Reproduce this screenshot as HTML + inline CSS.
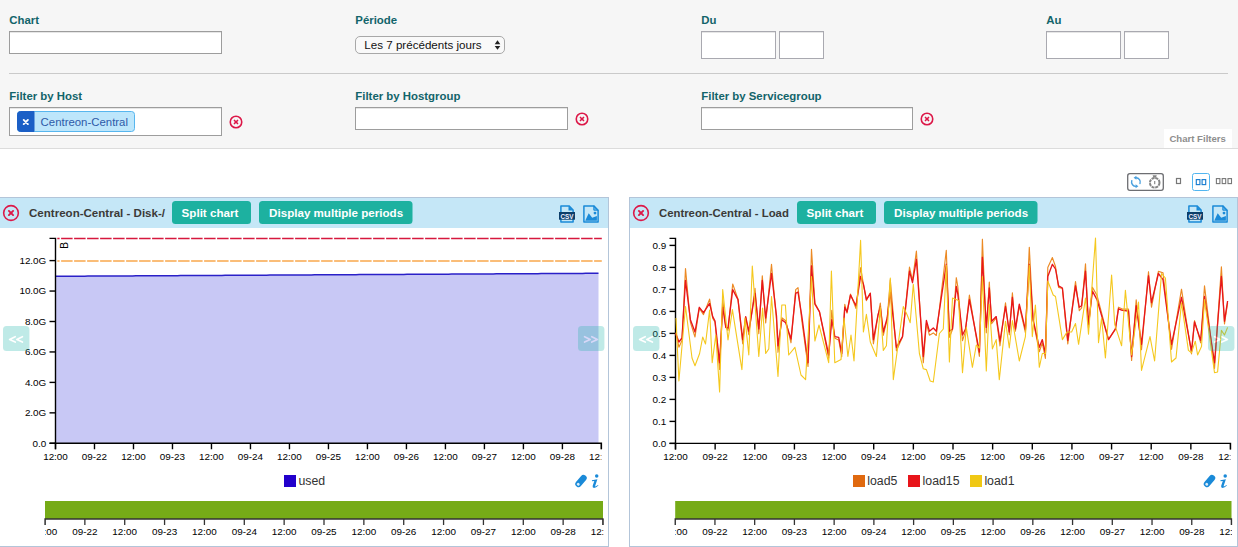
<!DOCTYPE html>
<html><head><meta charset="utf-8"><style>
html,body{margin:0;padding:0;background:#fff;overflow:hidden}
svg{display:block}
text{font-family:"Liberation Sans", sans-serif}
</style></head><body>
<svg width="1238" height="547" viewBox="0 0 1238 547">

<rect x="0" y="0" width="1238" height="148" fill="#f6f6f6"/>
<rect x="0" y="148" width="1238" height="1" fill="#dcdcdc"/>
<rect x="9" y="73" width="1219" height="1" fill="#cacaca"/>
<text x="9.3" y="24" font-size="11.4" font-weight="bold" fill="#12646a">Chart</text>
<text x="355.3" y="24" font-size="11.4" font-weight="bold" fill="#12646a">Période</text>
<text x="701.3" y="24" font-size="11.4" font-weight="bold" fill="#12646a">Du</text>
<text x="1046.3" y="24" font-size="11.4" font-weight="bold" fill="#12646a">Au</text>
<text x="9.3" y="100" font-size="11.4" font-weight="bold" fill="#12646a">Filter by Host</text>
<text x="355.3" y="100" font-size="11.4" font-weight="bold" fill="#12646a">Filter by Hostgroup</text>
<text x="701.3" y="100" font-size="11.4" font-weight="bold" fill="#12646a">Filter by Servicegroup</text>
<rect x="9.5" y="31.5" width="212" height="22" fill="#fff" stroke="#9d9d9d" stroke-width="1"/>
<rect x="10" y="32" width="211" height="1" fill="#e6e6e6"/>
<rect x="355.5" y="36.5" width="149" height="17" rx="4.5" fill="#f9f9f9" stroke="#a8a8a8"/>
<text x="364.3" y="48.7" font-size="11.6" fill="#111">Les 7 précédents jours</text>
<path d="M497.5 40.3 L500.3 44.2 L494.7 44.2 Z M497.5 49.8 L500.3 45.9 L494.7 45.9 Z" fill="#222"/>
<rect x="701.5" y="31.5" width="74" height="27" fill="#fff" stroke="#a9a9b0" stroke-width="1"/>
<rect x="702" y="32" width="73" height="1" fill="#e6e6e6"/>
<rect x="779.5" y="31.5" width="44" height="27" fill="#fff" stroke="#a9a9b0" stroke-width="1"/>
<rect x="780" y="32" width="43" height="1" fill="#e6e6e6"/>
<rect x="1046.5" y="31.5" width="74" height="27" fill="#fff" stroke="#a9a9b0" stroke-width="1"/>
<rect x="1047" y="32" width="73" height="1" fill="#e6e6e6"/>
<rect x="1124.5" y="31.5" width="44" height="27" fill="#fff" stroke="#a9a9b0" stroke-width="1"/>
<rect x="1125" y="32" width="43" height="1" fill="#e6e6e6"/>
<rect x="9.5" y="107.5" width="212" height="28" fill="#fff" stroke="#9d9d9d" stroke-width="1"/>
<rect x="10" y="108" width="211" height="1" fill="#e6e6e6"/>
<rect x="355.5" y="107.5" width="212" height="22" fill="#fff" stroke="#9d9d9d" stroke-width="1"/>
<rect x="356" y="108" width="211" height="1" fill="#e6e6e6"/>
<rect x="701.5" y="107.5" width="211" height="22" fill="#fff" stroke="#9d9d9d" stroke-width="1"/>
<rect x="702" y="108" width="210" height="1" fill="#e6e6e6"/>
<rect x="17.5" y="111.5" width="117" height="20" rx="3" fill="#bde6fb" stroke="#57b6ee"/>
<path d="M20.5 111.5 H34 V131.5 H20.5 A3 3 0 0 1 17.5 128.5 V114.5 A3 3 0 0 1 20.5 111.5 Z" fill="#1b5fc6" stroke="#1b5fc6"/>
<path d="M23.7 119.9 L27.9 124.1 M27.9 119.9 L23.7 124.1" stroke="#fff" stroke-width="1.9" stroke-linecap="round"/>
<text x="40.6" y="125.8" font-size="11.4" fill="#2d5aa8">Centreon-Central</text>
<circle cx="236" cy="122" r="5.75" fill="none" stroke="#dc1848" stroke-width="1.6"/>
<g transform="translate(236 122) rotate(45)" fill="#dc1848"><rect x="-2.99" y="-0.80" width="5.98" height="1.6" rx="0.80"/><rect x="-0.80" y="-2.99" width="1.6" height="5.98" rx="0.80"/></g>
<circle cx="582" cy="119" r="5.75" fill="none" stroke="#dc1848" stroke-width="1.6"/>
<g transform="translate(582 119) rotate(45)" fill="#dc1848"><rect x="-2.99" y="-0.80" width="5.98" height="1.6" rx="0.80"/><rect x="-0.80" y="-2.99" width="1.6" height="5.98" rx="0.80"/></g>
<circle cx="927" cy="119" r="5.75" fill="none" stroke="#dc1848" stroke-width="1.6"/>
<g transform="translate(927 119) rotate(45)" fill="#dc1848"><rect x="-2.99" y="-0.80" width="5.98" height="1.6" rx="0.80"/><rect x="-0.80" y="-2.99" width="1.6" height="5.98" rx="0.80"/></g>
<rect x="1164" y="129" width="68" height="19" fill="#ffffff"/>
<text x="1169.4" y="142.2" font-size="9.6" font-weight="bold" fill="#8e8e8e">Chart Filters</text>
<rect x="1127.7" y="173.7" width="35.6" height="16.6" rx="2.2" fill="#fff" stroke="#6d6e72" stroke-width="1.3"/>
<g fill="none" stroke="#4aa0de" stroke-width="1.4" stroke-linecap="round"><path d="M1131.8 180.6 A4.3 4.3 0 0 0 1136.4 186.3"/><path d="M1136 177.8 A4.3 4.3 0 0 1 1140 183.6"/></g>
<path d="M1135.6 184.3 L1138.4 186.3 L1135.6 188.3 Z M1136.4 175.8 L1133.6 177.8 L1136.4 179.8 Z" fill="#4aa0de"/>
<circle cx="1154.7" cy="182.8" r="4.8" fill="none" stroke="#858585" stroke-width="2" stroke-dasharray="3.07,0.7"/>
<path d="M1152.6 175.2 H1156.8 L1156 177.4 H1153.4 Z" fill="#858585"/><rect x="1154.1" y="181" width="1.2" height="3.2" fill="#8a8a8a"/>
<rect x="1176.5" y="178.5" width="4" height="5" fill="none" stroke="#777" stroke-width="1.2"/>
<rect x="1192.5" y="173.5" width="17" height="17" rx="2" fill="#fff" stroke="#52b6f0" stroke-width="1"/>
<rect x="1196.3" y="179.6" width="3.6" height="5" fill="none" stroke="#1b7ed0" stroke-width="1.15"/><rect x="1202.1" y="179.6" width="3.6" height="5" fill="none" stroke="#1b7ed0" stroke-width="1.15"/>
<rect x="1216.4" y="178.6" width="3.5" height="5" fill="none" stroke="#777" stroke-width="1.1"/>
<rect x="1222.2" y="178.6" width="3.5" height="5" fill="none" stroke="#777" stroke-width="1.1"/>
<rect x="1228.0" y="178.6" width="3.5" height="5" fill="none" stroke="#777" stroke-width="1.1"/>
<rect x="-0.5" y="197.5" width="609" height="349" fill="#fff" stroke="#b3c5d9" stroke-width="1"/>
<rect x="0" y="198" width="608" height="30" fill="#c5e7f7"/>
<circle cx="11" cy="213" r="7.35" fill="none" stroke="#dc1848" stroke-width="1.6"/>
<g transform="translate(11 213) rotate(45)" fill="#dc1848"><rect x="-3.92" y="-0.95" width="7.84" height="1.9" rx="0.95"/><rect x="-0.95" y="-3.92" width="1.9" height="7.84" rx="0.95"/></g>
<text x="29" y="216.8" font-size="11.55" font-weight="bold" fill="#3b3a37">Centreon-Central - Disk-/</text>
<rect x="172" y="201" width="79" height="23" rx="3.5" fill="#1db1a0"/>
<text x="181.6" y="216.6" font-size="11.6" font-weight="bold" fill="#fff">Split chart</text>
<rect x="259" y="201" width="153.5" height="23" rx="3.5" fill="#1db1a0"/>
<text x="269.1" y="216.6" font-size="11.6" font-weight="bold" fill="#fff">Display multiple periods</text>
<path d="M560.9 205.9 H569 L573.1 210 V222.1 H560.9 Z" fill="none" stroke="#1a8ad8" stroke-width="1.5" stroke-linejoin="round"/>
<path d="M568.5 206 L573 210.5 H568.5 Z" fill="#1a8ad8"/>
<rect x="559" y="212" width="16" height="7.7" fill="#0c3e6a"/>
<text x="567" y="218.6" font-size="7.4" font-weight="bold" fill="#eef" text-anchor="middle" textLength="13" lengthAdjust="spacingAndGlyphs">CSV</text>
<path d="M583.9 205.9 H593.8 L598.1 210.2 V222.1 H583.9 Z" fill="none" stroke="#1a8ad8" stroke-width="1.5" stroke-linejoin="round"/>
<path d="M593.8 205.9 L598.1 210.2 H593.8 Z" fill="#1a8ad8" fill-opacity="0.55" stroke="#1a8ad8" stroke-width="1"/>
<path d="M585.2 220.7 L588.7 213.2 L592.2 217.7 L596.9 215.9 V220.7 Z" fill="#1a8ad8"/>
<circle cx="595" cy="213.1" r="1.4" fill="#1a8ad8"/>
<rect x="629.5" y="197.5" width="608" height="349" fill="#fff" stroke="#b3c5d9" stroke-width="1"/>
<rect x="630" y="198" width="607" height="30" fill="#c5e7f7"/>
<circle cx="641" cy="213" r="7.35" fill="none" stroke="#dc1848" stroke-width="1.6"/>
<g transform="translate(641 213) rotate(45)" fill="#dc1848"><rect x="-3.92" y="-0.95" width="7.84" height="1.9" rx="0.95"/><rect x="-0.95" y="-3.92" width="1.9" height="7.84" rx="0.95"/></g>
<text x="659" y="216.8" font-size="11.35" font-weight="bold" fill="#3b3a37">Centreon-Central - Load</text>
<rect x="797" y="201" width="79" height="23" rx="3.5" fill="#1db1a0"/>
<text x="806.6" y="216.6" font-size="11.6" font-weight="bold" fill="#fff">Split chart</text>
<rect x="884" y="201" width="153.5" height="23" rx="3.5" fill="#1db1a0"/>
<text x="894.1" y="216.6" font-size="11.6" font-weight="bold" fill="#fff">Display multiple periods</text>
<path d="M1188.9 205.9 H1197 L1201.1 210 V222.1 H1188.9 Z" fill="none" stroke="#1a8ad8" stroke-width="1.5" stroke-linejoin="round"/>
<path d="M1196.5 206 L1201 210.5 H1196.5 Z" fill="#1a8ad8"/>
<rect x="1187" y="212" width="16" height="7.7" fill="#0c3e6a"/>
<text x="1195" y="218.6" font-size="7.4" font-weight="bold" fill="#eef" text-anchor="middle" textLength="13" lengthAdjust="spacingAndGlyphs">CSV</text>
<path d="M1212.9 205.9 H1222.8 L1227.1 210.2 V222.1 H1212.9 Z" fill="none" stroke="#1a8ad8" stroke-width="1.5" stroke-linejoin="round"/>
<path d="M1222.8 205.9 L1227.1 210.2 H1222.8 Z" fill="#1a8ad8" fill-opacity="0.55" stroke="#1a8ad8" stroke-width="1"/>
<path d="M1214.2 220.7 L1217.7 213.2 L1221.2 217.7 L1225.9 215.9 V220.7 Z" fill="#1a8ad8"/>
<circle cx="1224" cy="213.1" r="1.4" fill="#1a8ad8"/>
<path d="M56.0 276.30 L59.2 276.28 L62.4 276.26 L65.6 276.25 L68.8 276.23 L72.0 276.21 L75.1 276.19 L78.3 276.18 L81.5 276.16 L84.7 276.14 L87.9 276.12 L91.1 276.11 L94.3 276.09 L97.5 276.07 L100.7 276.05 L103.9 276.04 L107.1 276.02 L110.2 276.00 L113.4 275.98 L116.6 275.96 L119.8 275.95 L123.0 275.93 L126.2 275.91 L129.4 275.89 L132.6 275.88 L135.8 275.86 L139.0 275.84 L142.2 275.82 L145.4 275.81 L148.5 275.79 L151.7 275.77 L154.9 275.75 L158.1 275.74 L161.3 275.72 L164.5 275.70 L167.7 275.68 L170.9 275.66 L174.1 275.65 L177.3 275.63 L180.5 275.61 L183.6 275.59 L186.8 275.58 L190.0 275.56 L193.2 275.54 L196.4 275.52 L199.6 275.51 L202.8 275.49 L206.0 275.47 L209.2 275.45 L212.4 275.44 L215.6 275.42 L218.8 275.40 L221.9 275.38 L225.1 275.36 L228.3 275.35 L231.5 275.33 L234.7 275.31 L237.9 275.29 L241.1 275.28 L244.3 275.26 L247.5 275.24 L250.7 275.22 L253.9 275.21 L257.0 275.19 L260.2 275.17 L263.4 275.15 L266.6 275.14 L269.8 275.12 L273.0 275.10 L276.2 275.08 L279.4 275.06 L282.6 275.05 L285.8 275.03 L289.0 275.01 L292.1 274.99 L295.3 274.98 L298.5 274.96 L301.7 274.94 L304.9 274.92 L308.1 274.91 L311.3 274.89 L314.5 274.87 L317.7 274.85 L320.9 274.84 L324.1 274.82 L327.2 274.80 L330.4 274.78 L333.6 274.76 L336.8 274.75 L340.0 274.73 L343.2 274.71 L346.4 274.69 L349.6 274.68 L352.8 274.66 L356.0 274.64 L359.2 274.62 L362.4 274.61 L365.5 274.59 L368.7 274.57 L371.9 274.55 L375.1 274.54 L378.3 274.52 L381.5 274.50 L384.7 274.48 L387.9 274.46 L391.1 274.45 L394.3 274.43 L397.5 274.41 L400.6 274.39 L403.8 274.38 L407.0 274.36 L410.2 274.34 L413.4 274.32 L416.6 274.31 L419.8 274.29 L423.0 274.27 L426.2 274.25 L429.4 274.24 L432.6 274.22 L435.8 274.20 L438.9 274.18 L442.1 274.16 L445.3 274.15 L448.5 274.13 L451.7 274.11 L454.9 274.09 L458.1 274.08 L461.3 274.06 L464.5 274.04 L467.7 274.02 L470.9 274.01 L474.0 273.99 L477.2 273.97 L480.4 273.95 L483.6 273.94 L486.8 273.92 L490.0 273.90 L493.2 273.88 L496.4 273.86 L499.6 273.85 L502.8 273.83 L506.0 273.81 L509.1 273.79 L512.3 273.78 L515.5 273.76 L518.7 273.74 L521.9 273.72 L525.1 273.71 L528.3 273.69 L531.5 273.67 L534.7 273.65 L537.9 273.64 L541.1 273.62 L544.2 273.60 L547.4 273.58 L550.6 273.56 L553.8 273.55 L557.0 273.53 L560.2 273.51 L563.4 273.49 L566.6 273.48 L569.8 273.46 L573.0 273.44 L576.2 273.42 L579.4 273.41 L582.5 273.39 L585.7 273.37 L588.9 273.35 L592.1 273.34 L595.3 273.32 L598.5 273.30 L598.5 443.3 L56 443.3 Z" fill="#c8c8f5"/>
<path d="M56.0 276.30 L59.2 276.28 L62.4 276.26 L65.6 276.25 L68.8 276.23 L72.0 276.21 L75.1 276.19 L78.3 276.18 L81.5 276.16 L84.7 276.14 L87.9 276.12 L91.1 276.11 L94.3 276.09 L97.5 276.07 L100.7 276.05 L103.9 276.04 L107.1 276.02 L110.2 276.00 L113.4 275.98 L116.6 275.96 L119.8 275.95 L123.0 275.93 L126.2 275.91 L129.4 275.89 L132.6 275.88 L135.8 275.86 L139.0 275.84 L142.2 275.82 L145.4 275.81 L148.5 275.79 L151.7 275.77 L154.9 275.75 L158.1 275.74 L161.3 275.72 L164.5 275.70 L167.7 275.68 L170.9 275.66 L174.1 275.65 L177.3 275.63 L180.5 275.61 L183.6 275.59 L186.8 275.58 L190.0 275.56 L193.2 275.54 L196.4 275.52 L199.6 275.51 L202.8 275.49 L206.0 275.47 L209.2 275.45 L212.4 275.44 L215.6 275.42 L218.8 275.40 L221.9 275.38 L225.1 275.36 L228.3 275.35 L231.5 275.33 L234.7 275.31 L237.9 275.29 L241.1 275.28 L244.3 275.26 L247.5 275.24 L250.7 275.22 L253.9 275.21 L257.0 275.19 L260.2 275.17 L263.4 275.15 L266.6 275.14 L269.8 275.12 L273.0 275.10 L276.2 275.08 L279.4 275.06 L282.6 275.05 L285.8 275.03 L289.0 275.01 L292.1 274.99 L295.3 274.98 L298.5 274.96 L301.7 274.94 L304.9 274.92 L308.1 274.91 L311.3 274.89 L314.5 274.87 L317.7 274.85 L320.9 274.84 L324.1 274.82 L327.2 274.80 L330.4 274.78 L333.6 274.76 L336.8 274.75 L340.0 274.73 L343.2 274.71 L346.4 274.69 L349.6 274.68 L352.8 274.66 L356.0 274.64 L359.2 274.62 L362.4 274.61 L365.5 274.59 L368.7 274.57 L371.9 274.55 L375.1 274.54 L378.3 274.52 L381.5 274.50 L384.7 274.48 L387.9 274.46 L391.1 274.45 L394.3 274.43 L397.5 274.41 L400.6 274.39 L403.8 274.38 L407.0 274.36 L410.2 274.34 L413.4 274.32 L416.6 274.31 L419.8 274.29 L423.0 274.27 L426.2 274.25 L429.4 274.24 L432.6 274.22 L435.8 274.20 L438.9 274.18 L442.1 274.16 L445.3 274.15 L448.5 274.13 L451.7 274.11 L454.9 274.09 L458.1 274.08 L461.3 274.06 L464.5 274.04 L467.7 274.02 L470.9 274.01 L474.0 273.99 L477.2 273.97 L480.4 273.95 L483.6 273.94 L486.8 273.92 L490.0 273.90 L493.2 273.88 L496.4 273.86 L499.6 273.85 L502.8 273.83 L506.0 273.81 L509.1 273.79 L512.3 273.78 L515.5 273.76 L518.7 273.74 L521.9 273.72 L525.1 273.71 L528.3 273.69 L531.5 273.67 L534.7 273.65 L537.9 273.64 L541.1 273.62 L544.2 273.60 L547.4 273.58 L550.6 273.56 L553.8 273.55 L557.0 273.53 L560.2 273.51 L563.4 273.49 L566.6 273.48 L569.8 273.46 L573.0 273.44 L576.2 273.42 L579.4 273.41 L582.5 273.39 L585.7 273.37 L588.9 273.35 L592.1 273.34 L595.3 273.32 L598.5 273.30" fill="none" stroke="#2a20c8" stroke-width="1.5"/>
<path d="M57.3 238.5 H601.8" stroke="#d6183e" stroke-width="1.3" stroke-dasharray="11.5,1.5" stroke-dashoffset="9.2"/>
<path d="M57.3 261 H601.8" stroke="#f9a84c" stroke-width="1.7" stroke-dasharray="11.5,1.5" stroke-dashoffset="9.2"/>
<path d="M49.5 238.4 H55.5 V443.3 H49.5" fill="none" stroke="#000" stroke-width="1.4"/>
<path d="M49.5 443.3 H55.5" stroke="#000" stroke-width="1.4"/>
<text x="46.3" y="446.7" font-size="9.9" text-anchor="end" fill="#000">0.0</text>
<path d="M49.5 412.85 H55.5" stroke="#000" stroke-width="1.4"/>
<text x="46.3" y="416.25" font-size="9.9" text-anchor="end" fill="#000">2.0G</text>
<path d="M49.5 382.40000000000003 H55.5" stroke="#000" stroke-width="1.4"/>
<text x="46.3" y="385.8" font-size="9.9" text-anchor="end" fill="#000">4.0G</text>
<path d="M49.5 351.95000000000005 H55.5" stroke="#000" stroke-width="1.4"/>
<text x="46.3" y="355.35" font-size="9.9" text-anchor="end" fill="#000">6.0G</text>
<path d="M49.5 321.5 H55.5" stroke="#000" stroke-width="1.4"/>
<text x="46.3" y="324.9" font-size="9.9" text-anchor="end" fill="#000">8.0G</text>
<path d="M49.5 291.05 H55.5" stroke="#000" stroke-width="1.4"/>
<text x="46.3" y="294.45" font-size="9.9" text-anchor="end" fill="#000">10.0G</text>
<path d="M49.5 260.6 H55.5" stroke="#000" stroke-width="1.4"/>
<text x="46.3" y="264.0" font-size="9.9" text-anchor="end" fill="#000">12.0G</text>
<text transform="translate(67.9 248.8) rotate(-90)" font-size="10" fill="#000">B</text>
<path d="M55.5 449.3 V443.3 H601.4 V449.3" fill="none" stroke="#000" stroke-width="1.4"/>
<clipPath id="clipL"><rect x="0" y="443.3" width="601.4" height="30"/></clipPath>
<g clip-path="url(#clipL)">
<path d="M55.50 443.3 V449.3" stroke="#000" stroke-width="1.4"/>
<text x="55.50" y="459.7" font-size="9.9" text-anchor="middle" fill="#000">12:00</text>
<path d="M94.49 443.3 V449.3" stroke="#000" stroke-width="1.4"/>
<text x="94.49" y="459.7" font-size="9.9" text-anchor="middle" fill="#000">09-22</text>
<path d="M133.49 443.3 V449.3" stroke="#000" stroke-width="1.4"/>
<text x="133.49" y="459.7" font-size="9.9" text-anchor="middle" fill="#000">12:00</text>
<path d="M172.48 443.3 V449.3" stroke="#000" stroke-width="1.4"/>
<text x="172.48" y="459.7" font-size="9.9" text-anchor="middle" fill="#000">09-23</text>
<path d="M211.47 443.3 V449.3" stroke="#000" stroke-width="1.4"/>
<text x="211.47" y="459.7" font-size="9.9" text-anchor="middle" fill="#000">12:00</text>
<path d="M250.46 443.3 V449.3" stroke="#000" stroke-width="1.4"/>
<text x="250.46" y="459.7" font-size="9.9" text-anchor="middle" fill="#000">09-24</text>
<path d="M289.46 443.3 V449.3" stroke="#000" stroke-width="1.4"/>
<text x="289.46" y="459.7" font-size="9.9" text-anchor="middle" fill="#000">12:00</text>
<path d="M328.45 443.3 V449.3" stroke="#000" stroke-width="1.4"/>
<text x="328.45" y="459.7" font-size="9.9" text-anchor="middle" fill="#000">09-25</text>
<path d="M367.44 443.3 V449.3" stroke="#000" stroke-width="1.4"/>
<text x="367.44" y="459.7" font-size="9.9" text-anchor="middle" fill="#000">12:00</text>
<path d="M406.44 443.3 V449.3" stroke="#000" stroke-width="1.4"/>
<text x="406.44" y="459.7" font-size="9.9" text-anchor="middle" fill="#000">09-26</text>
<path d="M445.43 443.3 V449.3" stroke="#000" stroke-width="1.4"/>
<text x="445.43" y="459.7" font-size="9.9" text-anchor="middle" fill="#000">12:00</text>
<path d="M484.42 443.3 V449.3" stroke="#000" stroke-width="1.4"/>
<text x="484.42" y="459.7" font-size="9.9" text-anchor="middle" fill="#000">09-27</text>
<path d="M523.41 443.3 V449.3" stroke="#000" stroke-width="1.4"/>
<text x="523.41" y="459.7" font-size="9.9" text-anchor="middle" fill="#000">12:00</text>
<path d="M562.41 443.3 V449.3" stroke="#000" stroke-width="1.4"/>
<text x="562.41" y="459.7" font-size="9.9" text-anchor="middle" fill="#000">09-28</text>
<path d="M601.40 443.3 V449.3" stroke="#000" stroke-width="1.4"/>
<text x="601.40" y="459.7" font-size="9.9" text-anchor="middle" fill="#000">12:00</text>
</g>
<rect x="284" y="475" width="12" height="12" fill="#2200cc"/>
<text x="298.4" y="484.8" font-size="12.3" fill="#333">used</text>
<g transform="translate(581.0 481) rotate(-50)"><rect x="-7" y="-3.2" width="14" height="6.4" rx="3" fill="#1a8ad8"/><rect x="-5.6" y="-1.4" width="2.6" height="2.8" rx="1" fill="#fff" opacity="0.85"/></g>
<circle cx="596.7" cy="475.9" r="1.75" fill="#1a8ad8"/>
<path d="M591.9 480.3 L597.4 479.2 L595.2 485.8 Q595.0 486.7 595.9 486.2 L598.1 484.9 L598.4 485.6 Q596.1 487.9 594.0 487.9 Q592.1 487.8 592.7 485.8 L594.3 481.1 L592.0 481.2 Z" fill="#1a8ad8"/>
<rect x="45" y="501" width="558" height="18" fill="#76ab17"/>
<path d="M45 525 V519 H603 V525" fill="none" stroke="#333" stroke-width="1.3"/>
<clipPath id="clipNL"><rect x="45" y="519" width="558.5" height="30"/></clipPath>
<g clip-path="url(#clipNL)">
<path d="M45.00 519 V525" stroke="#333" stroke-width="1.3"/>
<text x="45.00" y="534.6" font-size="9.9" text-anchor="middle" fill="#000">12:00</text>
<path d="M84.86 519 V525" stroke="#333" stroke-width="1.3"/>
<text x="84.86" y="534.6" font-size="9.9" text-anchor="middle" fill="#000">09-22</text>
<path d="M124.71 519 V525" stroke="#333" stroke-width="1.3"/>
<text x="124.71" y="534.6" font-size="9.9" text-anchor="middle" fill="#000">12:00</text>
<path d="M164.57 519 V525" stroke="#333" stroke-width="1.3"/>
<text x="164.57" y="534.6" font-size="9.9" text-anchor="middle" fill="#000">09-23</text>
<path d="M204.43 519 V525" stroke="#333" stroke-width="1.3"/>
<text x="204.43" y="534.6" font-size="9.9" text-anchor="middle" fill="#000">12:00</text>
<path d="M244.29 519 V525" stroke="#333" stroke-width="1.3"/>
<text x="244.29" y="534.6" font-size="9.9" text-anchor="middle" fill="#000">09-24</text>
<path d="M284.14 519 V525" stroke="#333" stroke-width="1.3"/>
<text x="284.14" y="534.6" font-size="9.9" text-anchor="middle" fill="#000">12:00</text>
<path d="M324.00 519 V525" stroke="#333" stroke-width="1.3"/>
<text x="324.00" y="534.6" font-size="9.9" text-anchor="middle" fill="#000">09-25</text>
<path d="M363.86 519 V525" stroke="#333" stroke-width="1.3"/>
<text x="363.86" y="534.6" font-size="9.9" text-anchor="middle" fill="#000">12:00</text>
<path d="M403.71 519 V525" stroke="#333" stroke-width="1.3"/>
<text x="403.71" y="534.6" font-size="9.9" text-anchor="middle" fill="#000">09-26</text>
<path d="M443.57 519 V525" stroke="#333" stroke-width="1.3"/>
<text x="443.57" y="534.6" font-size="9.9" text-anchor="middle" fill="#000">12:00</text>
<path d="M483.43 519 V525" stroke="#333" stroke-width="1.3"/>
<text x="483.43" y="534.6" font-size="9.9" text-anchor="middle" fill="#000">09-27</text>
<path d="M523.29 519 V525" stroke="#333" stroke-width="1.3"/>
<text x="523.29" y="534.6" font-size="9.9" text-anchor="middle" fill="#000">12:00</text>
<path d="M563.14 519 V525" stroke="#333" stroke-width="1.3"/>
<text x="563.14" y="534.6" font-size="9.9" text-anchor="middle" fill="#000">09-28</text>
<path d="M603.00 519 V525" stroke="#333" stroke-width="1.3"/>
<text x="603.00" y="534.6" font-size="9.9" text-anchor="middle" fill="#000">12:00</text>
</g>
<path d="M669.5 238.4 H675.5 V443.4 H669.5" fill="none" stroke="#000" stroke-width="1.4"/>
<path d="M669.5 443.4 H675.5" stroke="#000" stroke-width="1.4"/>
<text x="666.3" y="446.79999999999995" font-size="9.9" text-anchor="end" fill="#000">0.0</text>
<path d="M669.5 421.4 H675.5" stroke="#000" stroke-width="1.4"/>
<text x="666.3" y="424.79999999999995" font-size="9.9" text-anchor="end" fill="#000">0.1</text>
<path d="M669.5 399.4 H675.5" stroke="#000" stroke-width="1.4"/>
<text x="666.3" y="402.79999999999995" font-size="9.9" text-anchor="end" fill="#000">0.2</text>
<path d="M669.5 377.4 H675.5" stroke="#000" stroke-width="1.4"/>
<text x="666.3" y="380.79999999999995" font-size="9.9" text-anchor="end" fill="#000">0.3</text>
<path d="M669.5 355.4 H675.5" stroke="#000" stroke-width="1.4"/>
<text x="666.3" y="358.79999999999995" font-size="9.9" text-anchor="end" fill="#000">0.4</text>
<path d="M669.5 333.4 H675.5" stroke="#000" stroke-width="1.4"/>
<text x="666.3" y="336.79999999999995" font-size="9.9" text-anchor="end" fill="#000">0.5</text>
<path d="M669.5 311.4 H675.5" stroke="#000" stroke-width="1.4"/>
<text x="666.3" y="314.79999999999995" font-size="9.9" text-anchor="end" fill="#000">0.6</text>
<path d="M669.5 289.4 H675.5" stroke="#000" stroke-width="1.4"/>
<text x="666.3" y="292.79999999999995" font-size="9.9" text-anchor="end" fill="#000">0.7</text>
<path d="M669.5 267.4 H675.5" stroke="#000" stroke-width="1.4"/>
<text x="666.3" y="270.79999999999995" font-size="9.9" text-anchor="end" fill="#000">0.8</text>
<path d="M669.5 245.39999999999998 H675.5" stroke="#000" stroke-width="1.4"/>
<text x="666.3" y="248.79999999999998" font-size="9.9" text-anchor="end" fill="#000">0.9</text>
<path d="M675.5 449.4 V443.4 H1230.5 V449.4" fill="none" stroke="#000" stroke-width="1.4"/>
<clipPath id="clipR"><rect x="630" y="443.4" width="600.5" height="30"/></clipPath>
<g clip-path="url(#clipR)">
<path d="M675.50 443.4 V449.4" stroke="#000" stroke-width="1.4"/>
<text x="675.50" y="459.7" font-size="9.9" text-anchor="middle" fill="#000">12:00</text>
<path d="M715.14 443.4 V449.4" stroke="#000" stroke-width="1.4"/>
<text x="715.14" y="459.7" font-size="9.9" text-anchor="middle" fill="#000">09-22</text>
<path d="M754.79 443.4 V449.4" stroke="#000" stroke-width="1.4"/>
<text x="754.79" y="459.7" font-size="9.9" text-anchor="middle" fill="#000">12:00</text>
<path d="M794.43 443.4 V449.4" stroke="#000" stroke-width="1.4"/>
<text x="794.43" y="459.7" font-size="9.9" text-anchor="middle" fill="#000">09-23</text>
<path d="M834.07 443.4 V449.4" stroke="#000" stroke-width="1.4"/>
<text x="834.07" y="459.7" font-size="9.9" text-anchor="middle" fill="#000">12:00</text>
<path d="M873.71 443.4 V449.4" stroke="#000" stroke-width="1.4"/>
<text x="873.71" y="459.7" font-size="9.9" text-anchor="middle" fill="#000">09-24</text>
<path d="M913.36 443.4 V449.4" stroke="#000" stroke-width="1.4"/>
<text x="913.36" y="459.7" font-size="9.9" text-anchor="middle" fill="#000">12:00</text>
<path d="M953.00 443.4 V449.4" stroke="#000" stroke-width="1.4"/>
<text x="953.00" y="459.7" font-size="9.9" text-anchor="middle" fill="#000">09-25</text>
<path d="M992.64 443.4 V449.4" stroke="#000" stroke-width="1.4"/>
<text x="992.64" y="459.7" font-size="9.9" text-anchor="middle" fill="#000">12:00</text>
<path d="M1032.29 443.4 V449.4" stroke="#000" stroke-width="1.4"/>
<text x="1032.29" y="459.7" font-size="9.9" text-anchor="middle" fill="#000">09-26</text>
<path d="M1071.93 443.4 V449.4" stroke="#000" stroke-width="1.4"/>
<text x="1071.93" y="459.7" font-size="9.9" text-anchor="middle" fill="#000">12:00</text>
<path d="M1111.57 443.4 V449.4" stroke="#000" stroke-width="1.4"/>
<text x="1111.57" y="459.7" font-size="9.9" text-anchor="middle" fill="#000">09-27</text>
<path d="M1151.21 443.4 V449.4" stroke="#000" stroke-width="1.4"/>
<text x="1151.21" y="459.7" font-size="9.9" text-anchor="middle" fill="#000">12:00</text>
<path d="M1190.86 443.4 V449.4" stroke="#000" stroke-width="1.4"/>
<text x="1190.86" y="459.7" font-size="9.9" text-anchor="middle" fill="#000">09-28</text>
<path d="M1230.50 443.4 V449.4" stroke="#000" stroke-width="1.4"/>
<text x="1230.50" y="459.7" font-size="9.9" text-anchor="middle" fill="#000">12:00</text>
</g>
<path d="M675.8 332.6 L678.9 347.2 L682.0 340.6 L685.5 268.5 L690.4 322.3 L695.0 337.0 L699.3 308.1 L703.5 314.6 L709.6 299.1 L712.7 318.1 L715.0 322.2 L719.6 369.4 L722.7 299.5 L725.8 327.5 L728.0 330.4 L732.7 284.0 L738.0 299.1 L742.7 343.8 L745.7 317.3 L748.8 334.6 L755.0 288.4 L758.8 333.6 L762.3 275.9 L765.7 323.0 L771.5 264.4 L776.5 320.0 L778.0 352.3 L781.8 317.8 L785.7 320.7 L791.0 342.8 L795.7 289.6 L798.0 287.6 L801.8 320.4 L808.0 366.5 L811.5 249.3 L814.9 303.1 L819.5 311.8 L828.7 358.2 L831.8 310.4 L834.8 338.2 L838.7 340.0 L841.7 356.6 L844.8 304.3 L847.0 313.2 L850.5 294.1 L856.0 308.5 L860.6 267.7 L863.4 284.0 L866.4 300.6 L870.3 293.1 L873.4 343.8 L878.0 315.5 L880.3 303.1 L883.3 335.3 L887.2 319.1 L890.3 279.9 L896.4 350.8 L902.5 337.0 L909.5 267.0 L912.5 280.5 L916.4 251.0 L923.3 362.6 L926.4 323.3 L929.4 335.2 L933.3 332.9 L936.3 335.5 L946.3 250.3 L949.4 337.3 L952.5 329.5 L956.3 277.7 L957.8 286.6 L962.5 340.7 L965.5 331.3 L969.4 295.1 L979.4 356.3 L982.4 239.2 L986.3 332.8 L989.3 282.0 L991.6 323.6 L996.2 317.8 L1000.0 345.8 L1005.5 302.8 L1009.3 334.8 L1012.4 292.9 L1015.4 331.2 L1019.3 305.8 L1025.4 332.7 L1029.3 247.4 L1033.1 320.4 L1039.3 351.7 L1042.3 342.9 L1045.4 358.5 L1047.8 267.5 L1052.4 257.6 L1055.5 266.5 L1058.6 287.4 L1062.4 288.5 L1067.8 343.9 L1075.5 281.6 L1079.3 310.7 L1081.6 308.0 L1085.5 263.9 L1088.5 328.2 L1092.4 287.2 L1097.0 295.4 L1108.5 339.3 L1115.4 329.3 L1118.5 307.2 L1122.3 309.1 L1128.5 309.1 L1131.6 360.4 L1136.2 299.8 L1141.5 349.8 L1148.5 271.7 L1151.5 307.2 L1158.4 271.4 L1163.0 272.8 L1171.5 349.3 L1181.5 289.2 L1191.5 354.0 L1194.5 320.7 L1200.7 342.8 L1204.5 285.9 L1214.5 368.4 L1221.4 266.9 L1224.5 323.9 L1227.6 302.8" fill="none" stroke="#ec8a24" stroke-width="1.15" stroke-linejoin="round"/>
<path d="M675.8 333.5 L678.9 342.0 L682.0 338.0 L685.5 280.4 L690.4 319.7 L695.0 332.0 L699.3 307.3 L703.5 312.6 L709.6 303.4 L712.7 316.6 L715.0 321.0 L719.6 362.7 L722.7 307.3 L725.8 327.4 L728.0 328.0 L732.7 289.6 L738.0 299.6 L742.7 339.6 L745.7 316.6 L748.8 331.2 L755.0 293.4 L758.8 328.9 L762.3 280.4 L765.7 318.0 L771.5 273.5 L776.5 316.0 L778.0 345.8 L781.8 319.7 L785.7 322.8 L791.0 339.0 L795.7 293.4 L798.0 292.0 L801.8 316.0 L808.0 362.7 L811.5 265.8 L814.9 304.2 L819.5 311.9 L828.7 355.0 L831.8 319.7 L834.8 336.6 L838.7 337.3 L841.7 353.5 L844.8 307.3 L847.0 312.0 L850.5 295.0 L856.0 305.7 L860.6 276.5 L863.4 284.2 L866.4 299.6 L870.3 293.4 L873.4 339.6 L878.0 315.0 L880.3 307.3 L883.3 332.0 L887.2 318.0 L890.3 291.9 L896.4 347.3 L902.5 336.6 L909.5 271.2 L912.5 282.7 L916.4 259.3 L923.3 356.5 L926.4 320.5 L929.4 331.2 L933.3 328.0 L936.3 331.2 L946.3 264.3 L949.4 331.2 L952.5 329.0 L956.3 286.5 L957.8 294.2 L962.5 335.0 L965.5 329.0 L969.4 299.6 L979.4 352.0 L982.4 257.3 L986.3 327.4 L989.3 288.0 L991.6 321.2 L996.2 316.6 L1000.0 341.0 L1005.5 306.5 L1009.3 332.0 L1012.4 297.3 L1015.4 329.0 L1019.3 304.2 L1025.4 329.7 L1029.3 264.3 L1033.1 319.7 L1039.3 347.3 L1042.3 339.6 L1045.4 353.5 L1047.8 276.5 L1052.4 264.3 L1055.5 269.0 L1058.6 285.8 L1062.4 288.0 L1067.8 340.4 L1075.5 285.8 L1079.3 307.3 L1081.6 305.7 L1085.5 271.2 L1088.5 324.3 L1092.4 291.1 L1097.0 299.6 L1108.5 339.6 L1115.4 328.9 L1118.5 308.8 L1122.3 310.3 L1128.5 311.0 L1131.6 356.5 L1136.2 305.7 L1141.5 344.3 L1148.5 275.8 L1151.5 302.7 L1158.4 273.5 L1163.0 279.6 L1171.5 344.3 L1181.5 297.3 L1191.5 351.2 L1194.5 322.0 L1200.7 340.4 L1204.5 296.5 L1214.5 362.7 L1221.4 276.5 L1224.5 321.2 L1227.6 301.0" fill="none" stroke="#e8161c" stroke-width="1.35" stroke-linejoin="round"/>
<path d="M676.0 318.0 L678.9 381.0 L685.5 306.5 L692.0 358.0 L695.0 365.8 L699.6 353.5 L702.7 337.0 L705.5 344.0 L709.6 310.0 L712.2 362.7 L715.8 335.0 L719.6 391.9 L722.7 289.6 L728.0 340.0 L732.4 309.6 L741.9 369.6 L745.0 318.0 L748.8 355.0 L752.3 266.0 L758.8 356.5 L762.6 308.0 L765.7 353.5 L768.8 348.9 L771.5 296.5 L778.0 376.5 L781.8 305.0 L785.4 305.0 L788.7 355.0 L794.9 347.3 L801.0 375.0 L805.6 379.6 L811.5 276.5 L814.9 341.0 L819.0 325.0 L828.7 362.7 L831.4 271.0 L834.8 362.7 L841.0 359.6 L844.0 318.0 L847.9 356.5 L851.0 335.0 L854.0 361.0 L860.6 240.4 L863.4 332.0 L866.4 314.3 L870.3 342.0 L876.4 356.5 L880.3 307.3 L883.3 350.4 L886.4 345.8 L890.3 278.0 L893.3 379.6 L903.3 306.5 L907.2 315.0 L910.2 322.8 L913.3 284.2 L919.4 353.5 L923.3 368.8 L926.4 369.6 L930.2 381.0 L933.3 382.0 L939.4 333.5 L943.3 329.0 L946.3 265.0 L949.4 362.0 L952.5 298.0 L958.6 300.4 L962.5 372.7 L966.3 327.4 L972.4 367.3 L976.3 345.0 L979.4 348.0 L982.4 276.5 L986.3 371.0 L989.3 304.2 L992.4 348.9 L996.2 339.6 L999.3 379.6 L1005.5 321.2 L1009.3 348.0 L1012.4 320.5 L1019.3 361.0 L1025.4 336.6 L1029.3 265.0 L1032.3 336.6 L1035.4 305.0 L1039.3 367.3 L1042.3 353.5 L1045.5 353.5 L1047.8 281.0 L1053.2 295.0 L1055.5 296.5 L1062.4 339.6 L1067.0 332.0 L1071.6 332.0 L1075.5 323.5 L1078.6 344.3 L1085.5 298.0 L1088.5 334.3 L1095.5 238.1 L1098.5 342.7 L1101.6 318.0 L1105.4 358.0 L1111.6 275.0 L1114.7 324.3 L1121.6 345.8 L1125.4 290.4 L1131.6 355.0 L1138.5 302.0 L1141.5 370.4 L1150.0 336.6 L1154.6 361.0 L1161.5 273.5 L1165.4 278.0 L1171.5 362.0 L1176.0 358.0 L1181.5 302.7 L1188.4 350.4 L1191.5 352.7 L1195.3 341.2 L1197.6 355.0 L1201.5 346.6 L1204.5 299.6 L1214.5 372.7 L1217.6 372.0 L1221.4 330.4 L1224.5 335.0 L1227.6 327.4" fill="none" stroke="#f5c81e" stroke-width="1.1" stroke-linejoin="round"/>
<rect x="853" y="475" width="12" height="12" fill="#e0690f"/>
<text x="867.3" y="484.8" font-size="12.3" fill="#333">load5</text>
<rect x="908" y="475" width="12" height="12" fill="#e8141a"/>
<text x="922.6" y="484.8" font-size="12.3" fill="#333">load15</text>
<rect x="970" y="475" width="12" height="12" fill="#f0c814"/>
<text x="984.4" y="484.8" font-size="12.3" fill="#333">load1</text>
<g transform="translate(1209.5 481) rotate(-50)"><rect x="-7" y="-3.2" width="14" height="6.4" rx="3" fill="#1a8ad8"/><rect x="-5.6" y="-1.4" width="2.6" height="2.8" rx="1" fill="#fff" opacity="0.85"/></g>
<circle cx="1225.2" cy="475.9" r="1.75" fill="#1a8ad8"/>
<path d="M1220.4 480.3 L1225.9 479.2 L1223.7 485.8 Q1223.5 486.7 1224.4 486.2 L1226.6 484.9 L1226.9 485.6 Q1224.6 487.9 1222.5 487.9 Q1220.6 487.8 1221.2 485.8 L1222.8 481.1 L1220.5 481.2 Z" fill="#1a8ad8"/>
<rect x="675.2" y="501" width="556.3" height="18" fill="#76ab17"/>
<path d="M675.2 525 V519 H1231.5 V525" fill="none" stroke="#333" stroke-width="1.3"/>
<clipPath id="clipNR"><rect x="675.2" y="519" width="556.8" height="30"/></clipPath>
<g clip-path="url(#clipNR)">
<path d="M675.20 519 V525" stroke="#333" stroke-width="1.3"/>
<text x="675.20" y="534.6" font-size="9.9" text-anchor="middle" fill="#000">12:00</text>
<path d="M714.94 519 V525" stroke="#333" stroke-width="1.3"/>
<text x="714.94" y="534.6" font-size="9.9" text-anchor="middle" fill="#000">09-22</text>
<path d="M754.67 519 V525" stroke="#333" stroke-width="1.3"/>
<text x="754.67" y="534.6" font-size="9.9" text-anchor="middle" fill="#000">12:00</text>
<path d="M794.41 519 V525" stroke="#333" stroke-width="1.3"/>
<text x="794.41" y="534.6" font-size="9.9" text-anchor="middle" fill="#000">09-23</text>
<path d="M834.14 519 V525" stroke="#333" stroke-width="1.3"/>
<text x="834.14" y="534.6" font-size="9.9" text-anchor="middle" fill="#000">12:00</text>
<path d="M873.88 519 V525" stroke="#333" stroke-width="1.3"/>
<text x="873.88" y="534.6" font-size="9.9" text-anchor="middle" fill="#000">09-24</text>
<path d="M913.61 519 V525" stroke="#333" stroke-width="1.3"/>
<text x="913.61" y="534.6" font-size="9.9" text-anchor="middle" fill="#000">12:00</text>
<path d="M953.35 519 V525" stroke="#333" stroke-width="1.3"/>
<text x="953.35" y="534.6" font-size="9.9" text-anchor="middle" fill="#000">09-25</text>
<path d="M993.09 519 V525" stroke="#333" stroke-width="1.3"/>
<text x="993.09" y="534.6" font-size="9.9" text-anchor="middle" fill="#000">12:00</text>
<path d="M1032.82 519 V525" stroke="#333" stroke-width="1.3"/>
<text x="1032.82" y="534.6" font-size="9.9" text-anchor="middle" fill="#000">09-26</text>
<path d="M1072.56 519 V525" stroke="#333" stroke-width="1.3"/>
<text x="1072.56" y="534.6" font-size="9.9" text-anchor="middle" fill="#000">12:00</text>
<path d="M1112.29 519 V525" stroke="#333" stroke-width="1.3"/>
<text x="1112.29" y="534.6" font-size="9.9" text-anchor="middle" fill="#000">09-27</text>
<path d="M1152.03 519 V525" stroke="#333" stroke-width="1.3"/>
<text x="1152.03" y="534.6" font-size="9.9" text-anchor="middle" fill="#000">12:00</text>
<path d="M1191.76 519 V525" stroke="#333" stroke-width="1.3"/>
<text x="1191.76" y="534.6" font-size="9.9" text-anchor="middle" fill="#000">09-28</text>
<path d="M1231.50 519 V525" stroke="#333" stroke-width="1.3"/>
<text x="1231.50" y="534.6" font-size="9.9" text-anchor="middle" fill="#000">12:00</text>
</g>
<g opacity="0.28"><rect x="3" y="326" width="26.4" height="25" rx="3.5" fill="#1eb6aa"/>
<path d="M15.2 336.7 L9.6 339.4 L15.2 342.09999999999997 M22.4 336.7 L16.8 339.4 L22.4 342.09999999999997" fill="none" stroke="#fff" stroke-width="1.7" stroke-linecap="round" stroke-linejoin="round"/></g>
<g opacity="0.28"><rect x="578" y="326" width="26.4" height="25" rx="3.5" fill="#1eb6aa"/>
<path d="M584.6 336.7 L590.2 339.4 L584.6 342.09999999999997 M591.8 336.7 L597.4 339.4 L591.8 342.09999999999997" fill="none" stroke="#fff" stroke-width="1.7" stroke-linecap="round" stroke-linejoin="round"/></g>
<g opacity="0.28"><rect x="633" y="326" width="26.4" height="25" rx="3.5" fill="#1eb6aa"/>
<path d="M645.2 336.7 L639.6 339.4 L645.2 342.09999999999997 M652.4 336.7 L646.8 339.4 L652.4 342.09999999999997" fill="none" stroke="#fff" stroke-width="1.7" stroke-linecap="round" stroke-linejoin="round"/></g>
<g opacity="0.28"><rect x="1208" y="326" width="26.4" height="25" rx="3.5" fill="#1eb6aa"/>
<path d="M1214.6 336.7 L1220.2 339.4 L1214.6 342.09999999999997 M1221.8 336.7 L1227.4 339.4 L1221.8 342.09999999999997" fill="none" stroke="#fff" stroke-width="1.7" stroke-linecap="round" stroke-linejoin="round"/></g>
</svg></body></html>
